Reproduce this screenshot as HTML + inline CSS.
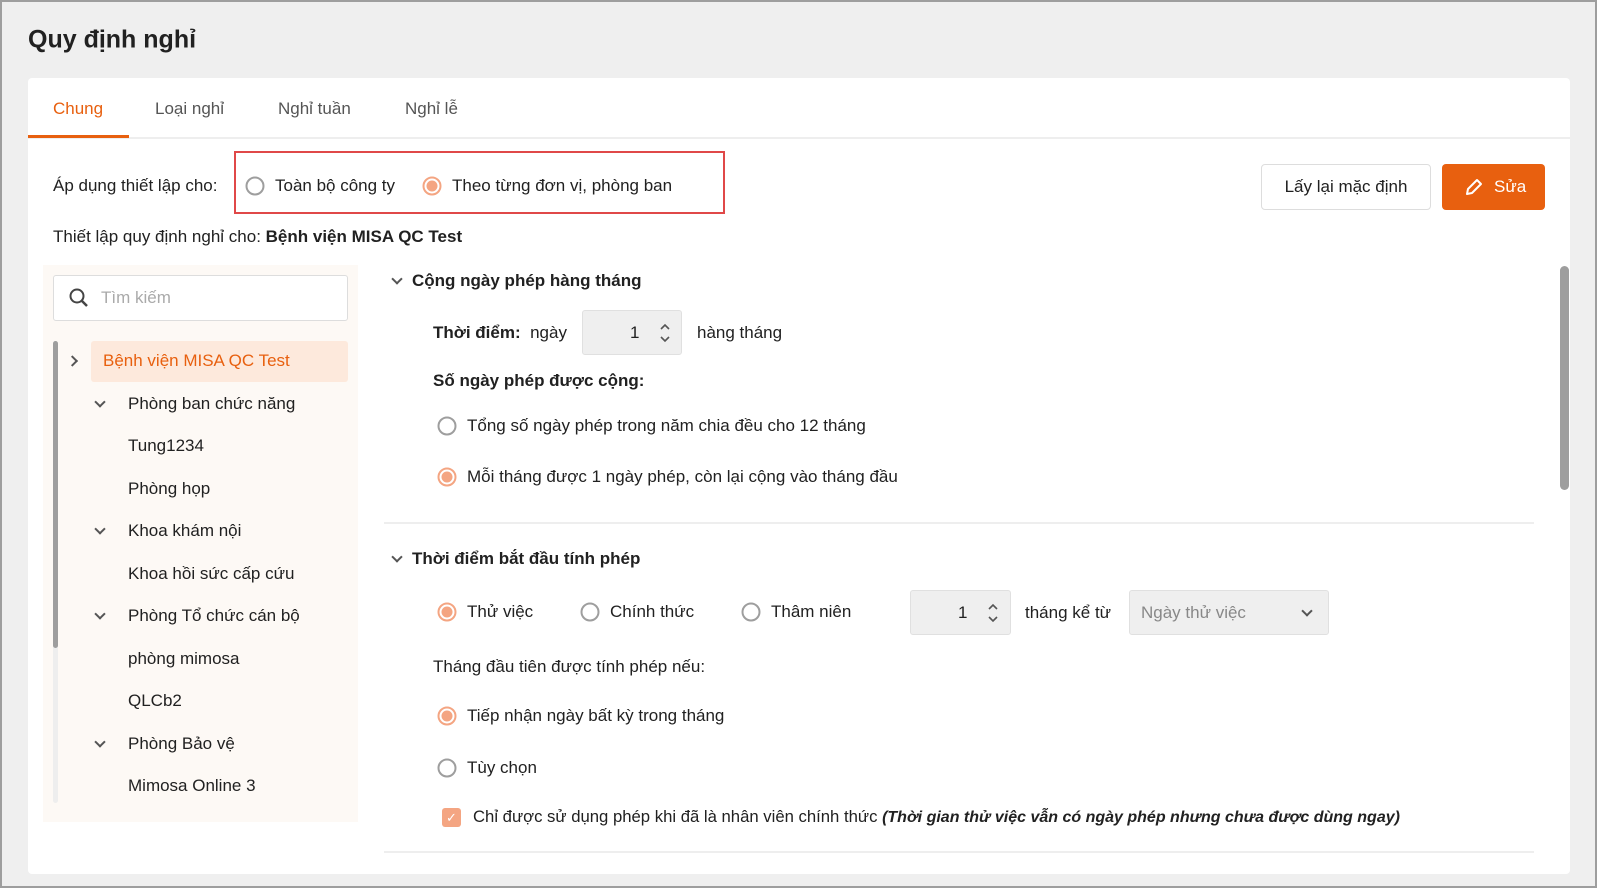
<!DOCTYPE html>
<html><head><meta charset="utf-8"><style>
*{margin:0;padding:0;box-sizing:border-box}
body{width:1597px;height:888px;background:#efefef;font-family:"Liberation Sans",sans-serif;color:#212121;position:relative;overflow:hidden;font-size:17px;border:2px solid #9e9e9e}
.a{position:absolute;white-space:nowrap}
.t{transform:translateY(-50%)}
.r{position:absolute;width:19px;height:19px;border:2px solid #9e9e9e;border-radius:50%;background:#fff;transform:translate(-50%,-50%)}
.r.on{border-color:#f4a582}
.r.on::after{content:"";position:absolute;left:2px;top:2px;width:11px;height:11px;border-radius:50%;background:#f4a582}
.chev{position:absolute;width:8px;height:8px;border-right:2px solid #555;border-bottom:2px solid #555;transform:translate(-50%,-75%) rotate(45deg)}
.spin{position:absolute;background:#efefef;border:1px solid #e0e0e0;border-radius:3px}
</style></head><body>
<div class="a t" style="left:26px;top:38px;font-size:25px;font-weight:bold">Quy định nghỉ</div>
<div class="a" style="left:26px;top:76px;width:1542px;height:796px;background:#fff;border-radius:4px"></div>
<div class="a" style="left:26px;top:135px;width:1542px;height:2px;background:#eee"></div>
<div class="a" style="left:26px;top:133px;width:101px;height:3px;background:#e8600f"></div>
<div class="a t" style="left:51px;top:107px;color:#e8600f">Chung</div>
<div class="a t" style="left:153px;top:107px;color:#555">Loại nghỉ</div>
<div class="a t" style="left:276px;top:107px;color:#555">Nghỉ tuần</div>
<div class="a t" style="left:403px;top:107px;color:#555">Nghỉ lễ</div>

<div class="a t" style="left:51px;top:184px">Áp dụng thiết lập cho:</div>
<div class="a" style="left:232px;top:149px;width:491px;height:63px;border:2px solid #e04848"></div>
<div class="r" style="left:253px;top:184px"></div><div class="a t" style="left:273px;top:184px">Toàn bộ công ty</div>
<div class="r on" style="left:430px;top:184px"></div><div class="a t" style="left:450px;top:184px">Theo từng đơn vị, phòng ban</div>
<div class="a" style="left:1259px;top:162px;width:170px;height:46px;border:1px solid #ddd;border-radius:4px;text-align:center;line-height:44px">Lấy lại mặc định</div>
<div class="a" style="left:1440px;top:162px;width:103px;height:46px;background:#e8600f;border-radius:4px;color:#fff;line-height:46px;padding-left:52px">Sửa</div>
<svg class="a" style="left:1461px;top:174px" width="22" height="22" viewBox="0 0 22 22"><path d="M4 18l1-5L14 4l4 4-9 9z" fill="none" stroke="#fff" stroke-width="2" stroke-linejoin="round"/></svg>

<div class="a t" style="left:51px;top:235px">Thiết lập quy định nghỉ cho: <b>Bệnh viện MISA QC Test</b></div>

<div class="a" style="left:41px;top:263px;width:315px;height:557px;background:#fdf9f5"></div>
<div class="a" style="left:51px;top:273px;width:295px;height:46px;background:#fff;border:1px solid #ddd;border-radius:3px"></div>
<svg class="a" style="left:66px;top:285px" width="22" height="22" viewBox="0 0 22 22"><circle cx="9" cy="9" r="6.5" fill="none" stroke="#444" stroke-width="2"/><path d="M14 14l5 5" stroke="#444" stroke-width="2.5"/></svg>
<div class="a t" style="left:99px;top:296px;color:#aaa">Tìm kiếm</div>
<div class="a" style="left:51px;top:339px;width:5px;height:462px;background:#eee;border-radius:3px"></div>
<div class="a" style="left:51px;top:339px;width:5px;height:307px;background:#9e9e9e;border-radius:3px"></div>
<div class="a" style="left:89px;top:339px;width:257px;height:41px;background:#fde9dc;border-radius:3px"></div>
<div class="chev" style="left:72px;top:359px;transform:translate(-70%,-50%) rotate(-45deg)"></div>
<div class="a t" style="left:101px;top:359px;color:#e8600f">Bệnh viện MISA QC Test</div>
<div class="chev" style="left:98px;top:402px"></div><div class="a t" style="left:126px;top:402px">Phòng ban chức năng</div>
<div class="a t" style="left:126px;top:444px">Tung1234</div>
<div class="a t" style="left:126px;top:487px">Phòng họp</div>
<div class="chev" style="left:98px;top:529px"></div><div class="a t" style="left:126px;top:529px">Khoa khám nội</div>
<div class="a t" style="left:126px;top:572px">Khoa hồi sức cấp cứu</div>
<div class="chev" style="left:98px;top:614px"></div><div class="a t" style="left:126px;top:614px">Phòng Tổ chức cán bộ</div>
<div class="a t" style="left:126px;top:657px">phòng mimosa</div>
<div class="a t" style="left:126px;top:699px">QLCb2</div>
<div class="chev" style="left:98px;top:742px"></div><div class="a t" style="left:126px;top:742px">Phòng Bảo vệ</div>
<div class="a t" style="left:126px;top:784px">Mimosa Online 3</div>

<div class="chev" style="left:395px;top:279px"></div>
<div class="a t" style="left:410px;top:279px;font-weight:bold">Cộng ngày phép hàng tháng</div>
<div class="a t" style="left:431px;top:331px"><b>Thời điểm:</b>&nbsp; ngày</div>
<div class="spin" style="left:580px;top:308px;width:100px;height:45px"></div>
<div class="a t" style="left:628px;top:331px">1</div>
<svg class="a" style="left:657px;top:321px" width="12" height="20" viewBox="0 0 12 20"><path d="M2 6l4-4 4 4M2 14l4 4 4-4" fill="none" stroke="#555" stroke-width="1.6"/></svg>
<div class="a t" style="left:695px;top:331px">hàng tháng</div>
<div class="a t" style="left:431px;top:379px;font-weight:bold">Số ngày phép được cộng:</div>
<div class="r" style="left:445px;top:424px"></div><div class="a t" style="left:465px;top:424px">Tổng số ngày phép trong năm chia đều cho 12 tháng</div>
<div class="r on" style="left:445px;top:475px"></div><div class="a t" style="left:465px;top:475px">Mỗi tháng được 1 ngày phép, còn lại cộng vào tháng đầu</div>
<div class="a" style="left:382px;top:520px;width:1150px;height:2px;background:#eee"></div>
<div class="chev" style="left:395px;top:557px"></div>
<div class="a t" style="left:410px;top:557px;font-weight:bold">Thời điểm bắt đầu tính phép</div>
<div class="r on" style="left:445px;top:610px"></div><div class="a t" style="left:465px;top:610px">Thử việc</div>
<div class="r" style="left:588px;top:610px"></div><div class="a t" style="left:608px;top:610px">Chính thức</div>
<div class="r" style="left:749px;top:610px"></div><div class="a t" style="left:769px;top:610px">Thâm niên</div>
<div class="spin" style="left:908px;top:588px;width:101px;height:45px"></div>
<div class="a t" style="left:956px;top:611px">1</div>
<svg class="a" style="left:985px;top:601px" width="12" height="20" viewBox="0 0 12 20"><path d="M2 6l4-4 4 4M2 14l4 4 4-4" fill="none" stroke="#555" stroke-width="1.6"/></svg>
<div class="a t" style="left:1023px;top:611px">tháng kể từ</div>
<div class="spin" style="left:1127px;top:588px;width:200px;height:45px"></div>
<div class="a t" style="left:1139px;top:611px;color:#888">Ngày thử việc</div>
<div class="chev" style="left:1305px;top:611px"></div>
<div class="a t" style="left:431px;top:665px">Tháng đầu tiên được tính phép nếu:</div>
<div class="r on" style="left:445px;top:714px"></div><div class="a t" style="left:465px;top:714px">Tiếp nhận ngày bất kỳ trong tháng</div>
<div class="r" style="left:445px;top:766px"></div><div class="a t" style="left:465px;top:766px">Tùy chọn</div>
<div class="a" style="left:440px;top:806px;width:19px;height:19px;background:#f4a582;border-radius:3px;color:#fff;font-size:13px;text-align:center;line-height:19px">✓</div>
<div class="a t" style="left:471px;top:815px;font-size:16.7px">Chỉ được sử dụng phép khi đã là nhân viên chính thức <b><i style="font-size:16px">(Thời gian thử việc vẫn có ngày phép nhưng chưa được dùng ngay)</i></b></div>
<div class="a" style="left:382px;top:849px;width:1150px;height:2px;background:#eee"></div>
<div class="a" style="left:1558px;top:264px;width:9px;height:224px;background:#9e9e9e;border-radius:5px"></div>
</body></html>
